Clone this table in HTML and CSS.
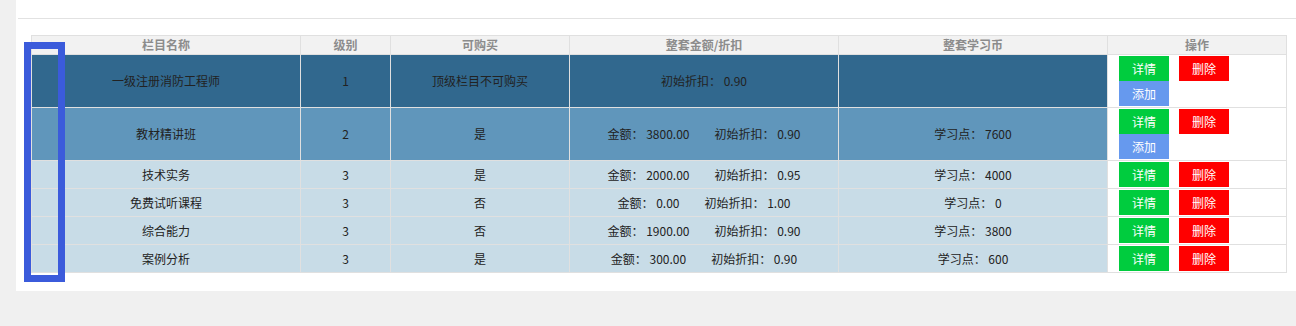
FILE: index.html
```html
<!DOCTYPE html>
<html lang="zh-CN">
<head>
<meta charset="utf-8">
<link rel="stylesheet" href="styles.css">
</head>
<body>
<div class="panel">
  <div class="topbar"></div>
  <div class="table-wrap">
    <table class="grid">
      <colgroup>
        <col class="c1"><col class="c2"><col class="c3"><col class="c4"><col class="c5"><col class="c6">
      </colgroup>
      <thead>
        <tr><th>栏目名称</th><th>级别</th><th>可购买</th><th>整套金额/折扣</th><th>整套学习币</th><th>操作</th></tr>
      </thead>
      <tbody>
        <tr class="lv1">
          <td>一级注册消防工程师</td><td>1</td><td>顶级栏目不可购买</td>
          <td>初始折扣： 0.90</td><td></td>
          <td class="ops"><div class="btns"><span class="btn green">详情</span><span class="btn red">删除</span><span class="btn blue">添加</span></div></td>
        </tr>
        <tr class="lv2">
          <td>教材精讲班</td><td>2</td><td>是</td>
          <td>金额： 3800.00<span class="gap">初始折扣： 0.90</span></td><td>学习点： 7600</td>
          <td class="ops"><div class="btns"><span class="btn green">详情</span><span class="btn red">删除</span><span class="btn blue">添加</span></div></td>
        </tr>
        <tr class="lv3">
          <td>技术实务</td><td>3</td><td>是</td>
          <td>金额： 2000.00<span class="gap">初始折扣： 0.95</span></td><td>学习点： 4000</td>
          <td class="ops"><div class="btns"><span class="btn green">详情</span><span class="btn red">删除</span></div></td>
        </tr>
        <tr class="lv3">
          <td>免费试听课程</td><td>3</td><td>否</td>
          <td>金额： 0.00<span class="gap">初始折扣： 1.00</span></td><td>学习点： 0</td>
          <td class="ops"><div class="btns"><span class="btn green">详情</span><span class="btn red">删除</span></div></td>
        </tr>
        <tr class="lv3">
          <td>综合能力</td><td>3</td><td>否</td>
          <td>金额： 1900.00<span class="gap">初始折扣： 0.90</span></td><td>学习点： 3800</td>
          <td class="ops"><div class="btns"><span class="btn green">详情</span><span class="btn red">删除</span></div></td>
        </tr>
        <tr class="lv3">
          <td>案例分析</td><td>3</td><td>是</td>
          <td>金额： 300.00<span class="gap">初始折扣： 0.90</span></td><td>学习点： 600</td>
          <td class="ops"><div class="btns"><span class="btn green">详情</span><span class="btn red">删除</span></div></td>
        </tr>
      </tbody>
    </table>
    <div class="highlight"></div>
  </div>
</div>
</body>
</html>
```

FILE: styles.css
```css
html, body {
  margin: 0;
  padding: 0;
  background: #f0f0f0;
  font-family: "Microsoft YaHei", "Noto Sans CJK SC", "Noto Sans", sans-serif;
  font-size: 12px;
  color: #222;
}
.panel {
  margin-left: 16px;
  background: #fff;
  padding-bottom: 18px;
}
.topbar {
  height: 18px;
  margin-left: 2px;
  border-bottom: 1px solid #e2e2e2;
}
.table-wrap {
  position: relative;
  margin: 16px 10px 0 15px;
}
.grid {
  width: 1255px;
  border-collapse: collapse;
  table-layout: fixed;
}
.c1 { width: 269px; }
.c2 { width: 90px; }
.c3 { width: 179px; }
.c4 { width: 269px; }
.c5 { width: 269px; }
.c6 { width: 179px; }
.grid th, .grid td {
  border: 1px solid #e0e0e0;
  text-align: center;
  padding: 0;
  line-height: 16px;
}
.grid th {
  height: 18px;
  background: #f2f2f2;
  color: #8c8c8c;
  font-weight: bold;
}
.lv1 td { background: #31688e; height: 52px; }
.lv2 td { background: #6096bb; height: 52px; }
.lv3 td { background: #c8dce7; height: 27px; }
.grid td.ops {
  background: #fff;
  text-align: left;
  vertical-align: top;
}
.btns {
  display: flex;
  flex-wrap: wrap;
  width: 120px;
  column-gap: 10px;
  padding: 1px 0 0 11px;
}
.btn {
  display: flex;
  align-items: center;
  justify-content: center;
  width: 50px;
  height: 25px;
  color: #fff;
  font-size: 12px;
}
.green { background: #00cc3e; }
.red { background: #ff0000; }
.blue { background: #6699ee; }
.gap { margin-left: 25px; }
.highlight {
  position: absolute;
  left: -7px;
  top: 7px;
  width: 27px;
  height: 226px;
  border: 7px solid #3b5bdb;
}
```
